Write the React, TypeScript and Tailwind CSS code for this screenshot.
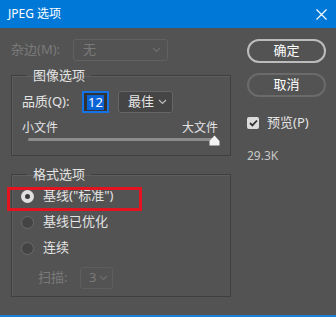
import React from "react";

const font = { fontFamily: '"Noto Sans", "Noto Sans CJK SC", sans-serif' };

function Radio({ checked }: { checked?: boolean }) {
  return checked ? (
    <span className="w-[13px] h-[13px] rounded-full bg-[#e0e0e0] flex items-center justify-center">
      <span className="w-[5px] h-[5px] rounded-full bg-[#3a3a3a]" />
    </span>
  ) : (
    <span className="w-[13px] h-[13px] rounded-full bg-[#444444] border border-[#6a6a6a]" />
  );
}

function Chevron({ color }: { color: string }) {
  return (
    <svg width="9" height="6" viewBox="0 0 9 6" fill="none">
      <path d="M1 1l3.5 3.5L8 1" stroke={color} strokeWidth="1.2" />
    </svg>
  );
}

export default function App() {
  return (
    <div className="w-[336px] h-[317px] bg-[#535353] relative flex flex-col text-[13px] text-[#e4e4e4]" style={font}>
      <div className="h-[28px] bg-[#0078d7] flex items-center justify-between pl-[8px] pr-[9px] text-white">
        <span className="text-[12px] leading-none">JPEG 选项</span>
        <svg width="11" height="11" viewBox="0 0 11 11">
          <path d="M0.5 0.5l10 10M10.5 0.5l-10 10" stroke="white" strokeWidth="1.1" />
        </svg>
      </div>

      <div className="flex-1 flex">
        <div className="w-[231px] pl-[11px] pt-[11px]">
          <div className="flex items-center h-[22px]">
            <span className="text-[#7a7a7a] w-[62px]">杂边(M):</span>
            <div className="w-[95px] h-[22px] rounded-[3px] border border-[#616161] flex items-center justify-between pl-[9px] pr-[6px] text-[#7a7a7a]">
              <span>无</span>
              <Chevron color="#6e6e6e" />
            </div>
          </div>

          <fieldset className="mt-[5px] border border-[#3f3f3f] shadow-[inset_1px_1px_0_#5e5e5e] pl-[15px] pr-0 pb-[9px]">
            <legend className="px-[6px] h-[18px] leading-[18px]">图像选项</legend>
            <div className="ml-[-15px] pl-[10px] pr-[12px]">
              <div className="flex items-center h-[22px] mt-[7px]">
                <span className="w-[60px]">品质(Q):</span>
                <div className="w-[27px] h-[22px] border-[2px] border-[#1473e6] bg-[#333333] flex items-center justify-center">
                  <span className="bg-[#0a64d6] text-white leading-[15px] px-[1px]">12</span>
                </div>
                <div className="ml-[9px] w-[55px] h-[22px] rounded-[3px] bg-[#454545] border border-[#666666] flex items-center justify-between pl-[9px] pr-[5px]">
                  <span>最佳</span>
                  <Chevron color="#bdbdbd" />
                </div>
              </div>
              <div className="flex justify-between h-[14px] leading-[14px] mt-[8px] text-[12px]">
                <span>小文件</span>
                <span>大文件</span>
              </div>
              <div className="relative h-[11px] ml-[6px] mr-[-2px]">
                <div className="absolute left-0 right-[6px] top-[3px] h-[3px] bg-[#8c8c8c] rounded-full" />
                <svg className="absolute right-0 top-0" width="11" height="11" viewBox="0 0 11 11">
                  <path d="M5.5 0.5L10.5 6V10.5H0.5V6Z" fill="#f2f2f2" />
                </svg>
              </div>
            </div>
          </fieldset>

          <fieldset className="mt-[9px] border border-[#3f3f3f] shadow-[inset_1px_1px_0_#5e5e5e] pl-[15px] pr-0 pb-[7px]">
            <legend className="px-[6px] h-[18px] leading-[18px]">格式选项</legend>
            <div className="ml-[-15px] pl-[9px]">
              <div className="flex items-center h-[26px] gap-[9px]">
                <Radio checked />
                <span>基线("标准")</span>
              </div>
              <div className="flex items-center h-[26px] gap-[9px]">
                <Radio />
                <span>基线已优化</span>
              </div>
              <div className="flex items-center h-[26px] gap-[9px]">
                <Radio />
                <span>连续</span>
              </div>
              <div className="flex items-center h-[22px] mt-[6px] pl-[17px] text-[#7a7a7a]">
                <span className="w-[42px]">扫描:</span>
                <div className="w-[33px] h-[22px] rounded-[3px] border border-[#5e5e5e] flex items-center justify-between pl-[8px] pr-[4px]">
                  <span>3</span>
                  <Chevron color="#6e6e6e" />
                </div>
              </div>
            </div>
          </fieldset>
        </div>

        <div className="ml-[16px] w-[79px] pt-[11px] flex flex-col">
          <div className="h-[24px] rounded-full border-[2px] border-[#bcbcbc] flex items-center justify-center text-white">确定</div>
          <div className="mt-[10px] h-[24px] rounded-full border-[2px] border-[#6b6b6b] flex items-center justify-center text-white">取消</div>
          <div className="mt-[20px] flex items-center gap-[8px] h-[12px]">
            <span className="w-[12px] h-[12px] rounded-[2px] bg-[#dcdcdc] flex items-center justify-center">
              <svg width="9" height="8" viewBox="0 0 9 8">
                <path d="M1 4l2.4 2.4L8 1.5" stroke="#333" strokeWidth="1.8" fill="none" />
              </svg>
            </span>
            <span>预览(P)</span>
          </div>
          <div className="mt-[20px] text-[#c8c8c8] text-[12px] leading-[14px]">29.3K</div>
        </div>
      </div>

      <div className="h-[2px] bg-[#1c7fd6]" />

      <div className="absolute left-[7px] top-[187px] w-[135px] h-[24px] border-[3px] border-[#e3141f]" />
    </div>
  );
}
